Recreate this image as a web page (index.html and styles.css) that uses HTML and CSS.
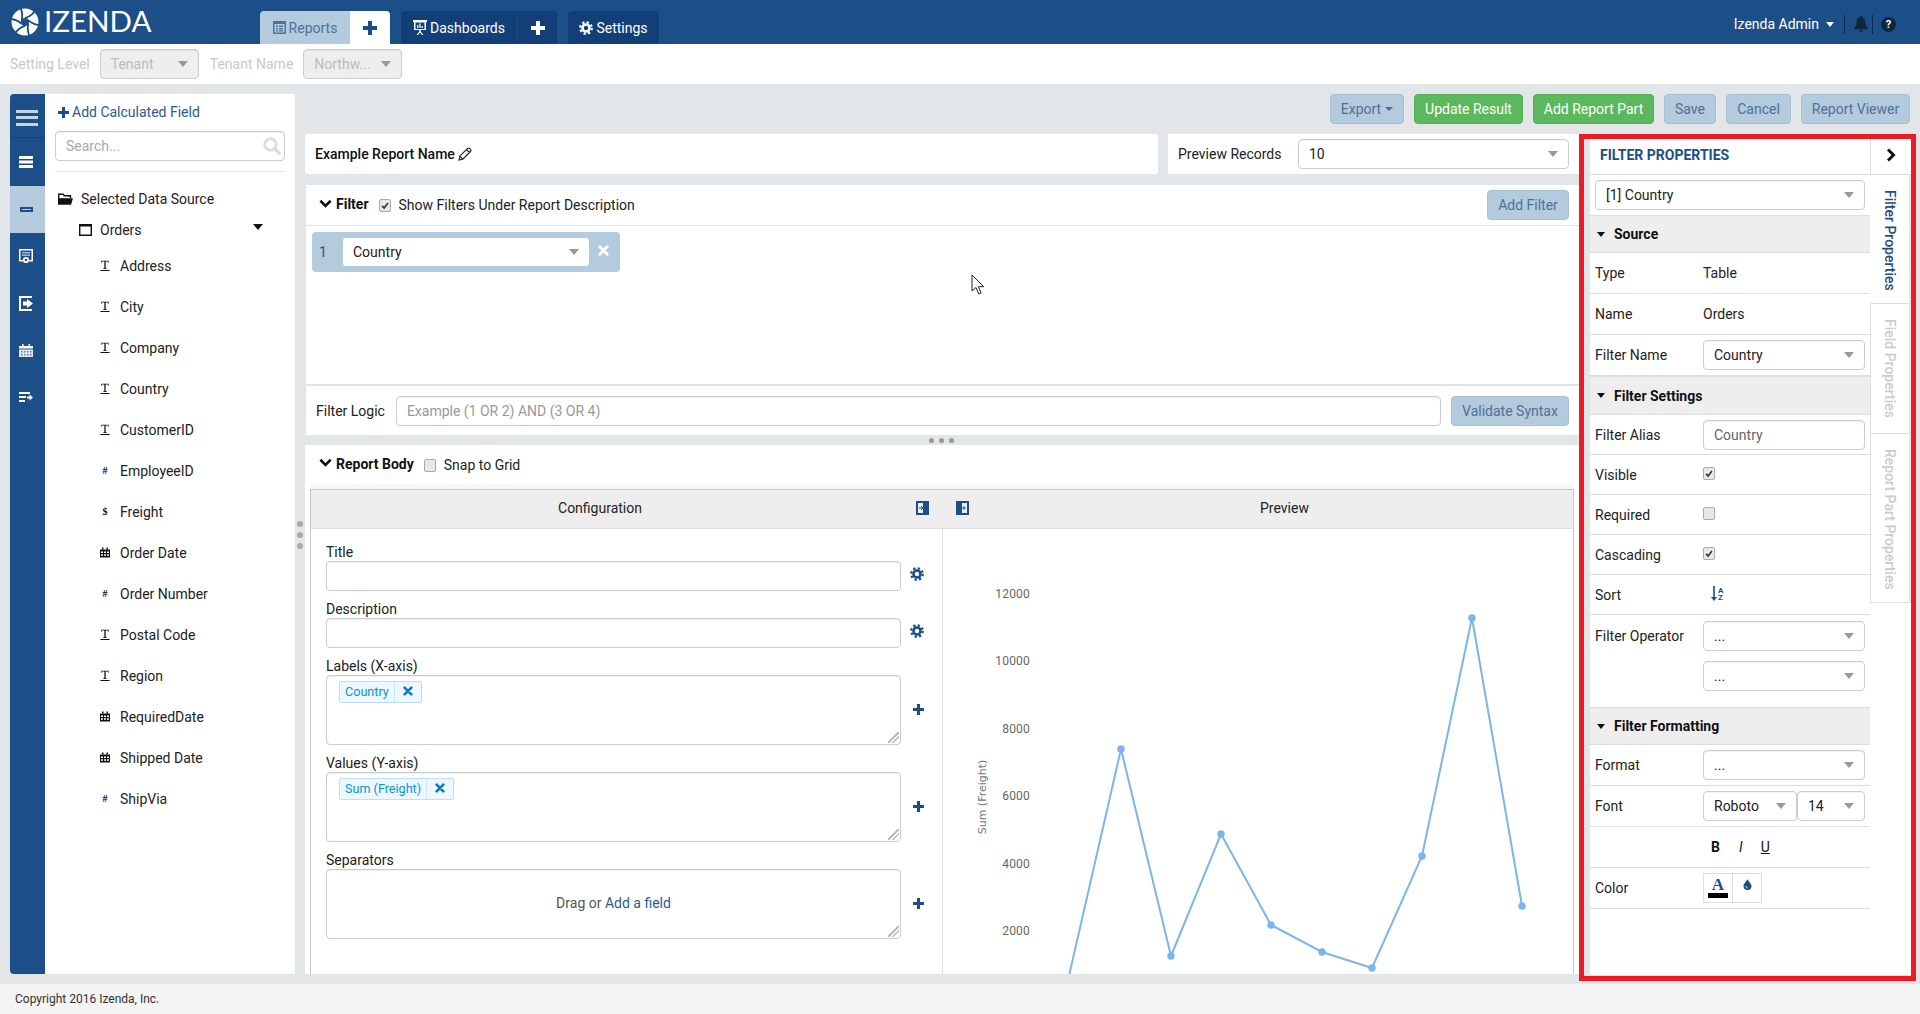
FILE: index.html
```html
<!DOCTYPE html>
<html lang="en">
<head>
<meta charset="utf-8">
<title>Izenda Report Designer</title>
<link rel="stylesheet" href="styles.css">
</head>
<body>
<svg class="defs" width="0" height="0" aria-hidden="true">
  <symbol id="gear" viewBox="0 0 16 16"><circle cx="8" cy="8" r="4" fill="none" stroke="currentColor" stroke-width="3"/><circle cx="8" cy="8" r="6.6" fill="none" stroke="currentColor" stroke-width="2.6" stroke-dasharray="2.6 2.58"/></symbol>
  <symbol id="plus" viewBox="0 0 14 14"><path d="M5 0h4v5h5v4H9v5H5V9H0V5h5z" fill="currentColor"/></symbol>
  <symbol id="times" viewBox="0 0 12 12"><path d="M2 2l8 8M10 2l-8 8" stroke="currentColor" stroke-width="3.2" stroke-linecap="round"/></symbol>
  <symbol id="chev" viewBox="0 0 14 10"><path d="M1.5 1.5L7 7l5.5-5.5" fill="none" stroke="currentColor" stroke-width="2.8"/></symbol>
  <symbol id="cal" viewBox="0 0 10 10"><path d="M0 2h10v8H0z" fill="currentColor"/><path d="M2 0h1.500v2H2zM6.500 0H8v2H6.500z" fill="currentColor"/><path d="M1 4h2v1.500H1zM4 4h2v1.500H4zM7 4h2v1.500H7zM1 6.800h2v1.500H1zM4 6.800h2v1.500H4zM7 6.800h2v1.500H7z" fill="#fff"/></symbol>
  <symbol id="tee" viewBox="0 0 10 12"><path d="M1 .7h8v2.300H8.200V1.600H5.700v7.300h1.200v.8H3.100v-.8h1.200V1.600H1.800V3H1zM0 10.800h10V12H0z" fill="currentColor"/></symbol>
</svg>

<header class="top">
  <div class="logo">
    <svg class="swirl" viewBox="-13 -13 26 26" width="28" height="28">
      <circle r="12.500" fill="#fff"/>
      <g class="slits">
        <path d="M0-3.500C4.500-5 8.500-7.500 10.500-13"/>
        <path transform="rotate(60)" d="M0-3.500C4.500-5 8.500-7.500 10.500-13"/>
        <path transform="rotate(120)" d="M0-3.500C4.500-5 8.500-7.500 10.500-13"/>
        <path transform="rotate(180)" d="M0-3.500C4.500-5 8.500-7.500 10.500-13"/>
        <path transform="rotate(240)" d="M0-3.500C4.500-5 8.500-7.500 10.500-13"/>
        <path transform="rotate(300)" d="M0-3.500C4.500-5 8.500-7.500 10.500-13"/>
      </g>
      <circle r="3.800" fill="#1c4e87"/>
    </svg>
    <span class="logotext">IZENDA</span>
  </div>
  <nav class="tabs">
    <a class="tab light w90">
      <svg class="ti" viewBox="0 0 13 13" width="13" height="13"><path d="M0 0h13v13H0z" fill="#4d7199"/><path d="M1.500 3h10v8.500h-10z" fill="#b3cbdc"/><path d="M3 4.500h2v1.500H3zM6 4.500h4V6H6zM3 7h2v1.500H3zM6 7h4v1.500H6zM3 9.300h2v1.200H3zM6 9.300h4v1.200H6z" fill="#4d7199"/></svg>
      Reports</a>
    <a class="tab white w40"><svg class="plus" width="14" height="14"><use href="#plus"/></svg></a>
    <a class="tab dark w115 ml">
      <svg class="ti" viewBox="0 0 14 15" width="14" height="15"><path d="M0 0h14v2H13v8H1V2H0z" fill="#fff"/><path d="M2.500 2.500h9V9h-9z" fill="#123f78"/><path d="M4 5h1.300v3H4zM6.300 3.500h1.300V8H6.300zM8.600 6h1.300v2H8.600zM6.300 10h1.400v1.500L10.500 15H9l-2-2.500L5 15H3.500l2.800-3.500z" fill="#fff"/></svg>
      Dashboards</a>
    <a class="tab dark w40 sep"><svg width="14" height="14"><use href="#plus"/></svg></a>
    <a class="tab dark w91 ml"><svg class="ti" width="14" height="14"><use href="#gear"/></svg> Settings</a>
  </nav>
  <div class="user">
    <span class="uname">Izenda Admin</span><span class="caret white-c"></span>
    <span class="vsep first"></span>
    <svg class="bell" viewBox="0 0 14 16" width="14" height="16"><path d="M7 0c1 0 1.300.7 1.300 1.300C10.500 2 11.500 3.800 11.500 6.500c0 3 1 4.500 2.500 5.800v.9H0v-.9C1.500 11 2.500 9.500 2.500 6.500c0-2.700 1-4.500 3.200-5.200C5.700.7 6 0 7 0zM5.300 14h3.400c0 1-.7 2-1.700 2s-1.700-1-1.700-2z" fill="#10253f"/></svg>
    <span class="vsep second"></span>
    <span class="help">?</span>
  </div>
</header>

<div class="subbar">
  <span class="sublabel">Setting Level</span>
  <div class="sel disabled w99"><span>Tenant</span><i class="caret"></i></div>
  <span class="sublabel">Tenant Name</span>
  <div class="sel disabled w99"><span>Northw...</span><i class="caret"></i></div>
</div>

<div class="work">
  <aside class="left">
    <div class="rail">
      <div class="rail-top"><span class="burger"></span></div>
      <div class="rail-item first">
        <svg viewBox="0 0 14 12" width="14" height="12"><path d="M0 0h14v3H0zM0 4.500h14v3H0zM0 9h14v3H0z" fill="#fff"/></svg>
      </div>
      <div class="rail-item active">
        <svg viewBox="0 0 13 5" width="13" height="5"><path d="M0 0h13v5H0z" fill="#1c4e87"/><path d="M2 2h9v1H2z" fill="#b3cbdc"/></svg>
      </div>
      <div class="rail-item">
        <svg viewBox="0 0 14 15" width="14" height="15"><path d="M0 0h14v12.500H10V11h2.500V1.500h-11V11H4v1.500H0z" fill="#fff"/><path d="M3 3h8v1.500H3zM3 5.500h8V7H3z" fill="#9fb8d0"/><circle cx="7" cy="11" r="2.200" fill="none" stroke="#fff" stroke-width="1.800"/></svg>
      </div>
      <div class="rail-item">
        <svg viewBox="0 0 14 15" width="14" height="15"><path d="M0 0h13v2H2v11h11v2H0z" fill="#fff"/><path d="M4 5.500h4V3l6 4.500-6 4.500V9.500H4z" fill="#fff"/></svg>
      </div>
      <div class="rail-item">
        <svg viewBox="0 0 14 13" width="14" height="13"><path d="M0 2h14v2.500H0zM3 0h1.500v2H3zM9.500 0H11v2H9.500z" fill="#fff"/><path d="M0 5.500h14V13H0z" fill="#dfe8f0"/><path d="M2 7h1.500v1.500H2zM5 7h1.500v1.500H5zM8 7h1.500v1.500H8zM11 7h1.500v1.500H11zM2 10h1.500v1.500H2zM5 10h1.500v1.500H5zM8 10h1.500v1.500H8zM11 10h1.500v1.500H11z" fill="#5b7ea5"/></svg>
      </div>
      <div class="rail-item">
        <svg viewBox="0 0 14 11" width="14" height="11"><path d="M0 0h11v2H0zM0 4h7v2H0zM0 8h6v2H0zM8 4.500h2.500V2.500L14 5.500l-3.500 3V6.500H8z" fill="#fff"/></svg>
      </div>
    </div>
    <div class="fields">
      <a class="addcalc"><svg class="navy" width="11" height="11"><use href="#plus"/></svg>Add Calculated Field</a>
      <div class="search"><span>Search...</span>
        <svg viewBox="0 0 18 18" width="18" height="18"><circle cx="7.500" cy="7.500" r="5.700" fill="none" stroke="#ddd" stroke-width="3"/><path d="M11.500 11.500L16 16" stroke="#ddd" stroke-width="3.500" stroke-linecap="round"/></svg>
      </div>
      <div class="rule"></div>
      <div class="ds"><svg viewBox="0 0 15 12" width="15" height="12"><path d="M.7 11V1.200h4.500l1 1.500h6.300V5" fill="none" stroke="#111" stroke-width="1.400"/><path d="M0 11.800V5.200h15l-2 6.600z" fill="#111"/></svg><span>Selected Data Source</span></div>
      <div class="orders"><svg viewBox="0 0 13 12" width="13" height="12"><path d="M.7.700h11.600v10.600H.7z" fill="none" stroke="#111" stroke-width="1.400"/><path d="M0 0h13v2.500H0z" fill="#111"/></svg><span>Orders</span><i class="caret black"></i></div>
      <ul class="flist">
        <li><svg class="ft" width="10" height="11"><use href="#tee"/></svg><span>Address</span></li>
        <li><svg class="ft" width="10" height="11"><use href="#tee"/></svg><span>City</span></li>
        <li><svg class="ft" width="10" height="11"><use href="#tee"/></svg><span>Company</span></li>
        <li><svg class="ft" width="10" height="11"><use href="#tee"/></svg><span>Country</span></li>
        <li><svg class="ft" width="10" height="11"><use href="#tee"/></svg><span>CustomerID</span></li>
        <li><b class="ft">#</b><span>EmployeeID</span></li>
        <li><b class="ft">$</b><span>Freight</span></li>
        <li><svg class="ft" width="10" height="10"><use href="#cal"/></svg><span>Order Date</span></li>
        <li><b class="ft">#</b><span>Order Number</span></li>
        <li><svg class="ft" width="10" height="11"><use href="#tee"/></svg><span>Postal Code</span></li>
        <li><svg class="ft" width="10" height="11"><use href="#tee"/></svg><span>Region</span></li>
        <li><svg class="ft" width="10" height="10"><use href="#cal"/></svg><span>RequiredDate</span></li>
        <li><svg class="ft" width="10" height="10"><use href="#cal"/></svg><span>Shipped Date</span></li>
        <li><b class="ft">#</b><span>ShipVia</span></li>
      </ul>
    </div>
    <div class="vdots"><i></i><i></i><i></i></div>
  </aside>

  <div class="rightcol">
    <div class="toolbar">
      <a class="btn b74">Export<i class="caret btn-c"></i></a>
      <a class="btn green b109">Update Result</a>
      <a class="btn green b121">Add Report Part</a>
      <a class="btn b52">Save</a>
      <a class="btn b65">Cancel</a>
      <a class="btn b109">Report Viewer</a>
    </div>
    <div class="content">
      <main class="main">
        <div class="toprow">
          <div class="namebar"><b>Example Report Name</b>
            <svg viewBox="0 0 14 14" width="14" height="14"><path d="M1 13l.8-3.800L9.500 1.500a1.500 1.500 0 0 1 2.100 0l.9.900a1.500 1.500 0 0 1 0 2.100L4.800 12.200zM8.500 2.500l3 3M2 9.500l2.500 2.500" fill="none" stroke="#222" stroke-width="1.100"/></svg>
          </div>
          <div class="previewbar"><span>Preview Records</span>
            <div class="sel w271"><span>10</span><i class="caret"></i></div>
          </div>
        </div>

        <section class="filter">
          <div class="phead">
            <svg class="chev" width="13" height="10"><use href="#chev"/></svg><b>Filter</b>
            <span class="cb on"><svg viewBox="0 0 12 12"><path d="M2.500 6.500l2.500 2.500 4.500-6" fill="none" stroke="#333" stroke-width="2"/></svg></span>
            <span class="cblabel">Show Filters Under Report Description</span>
            <a class="btn push b82">Add Filter</a>
          </div>
          <div class="filterbody">
            <div class="fchip"><span class="fnum">1</span>
              <div class="sel plain"><span>Country</span><i class="caret"></i></div>
              <svg class="fx" width="11" height="11"><use href="#times"/></svg>
            </div>
          </div>
          <div class="logic">
            <span>Filter Logic</span>
            <div class="inp grow ph">Example (1 OR 2) AND (3 OR 4)</div>
            <a class="btn b118">Validate Syntax</a>
          </div>
        </section>
        <div class="hdots"><i></i><i></i><i></i></div>

        <section class="rbody">
          <div class="phead tall">
            <svg class="chev" width="13" height="10"><use href="#chev"/></svg><b>Report Body</b>
            <span class="cb"></span>
            <span class="cblabel">Snap to Grid</span>
          </div>
          <div class="gridstrip"></div>
          <div class="box">
            <div class="boxhead">
              <div class="bh-left">Configuration
                <svg class="bi bi1" viewBox="0 0 13 14" width="13" height="14"><path d="M0 0h13v14H0z" fill="#1c4e87"/><path d="M2 2h5v10H2z" fill="#eee"/><path d="M3 7h3M5 5l2 2-2 2" fill="none" stroke="#1c4e87" stroke-width="1"/></svg>
                <svg class="bi bi2" viewBox="0 0 13 14" width="13" height="14"><path d="M0 0h13v14H0z" fill="#1c4e87"/><path d="M6 2h5v10H6z" fill="#eee"/><path d="M10 7H7M8.500 5l-2 2 2 2" fill="none" stroke="#1c4e87" stroke-width="1"/></svg>
              </div>
              <div class="bh-right">Preview</div>
            </div>
            <div class="boxbody">
              <div class="config">
                <div class="fg"><label>Title</label>
                  <div class="fgrow"><div class="inp"></div><svg class="side gearic" width="14" height="14"><use href="#gear"/></svg></div></div>
                <div class="fg"><label>Description</label>
                  <div class="fgrow"><div class="inp"></div><svg class="side gearic" width="14" height="14"><use href="#gear"/></svg></div></div>
                <div class="fg"><label>Labels (X-axis)</label>
                  <div class="fgrow"><div class="area"><span class="tag"><em>Country</em><svg width="10" height="10"><use href="#times"/></svg></span><span class="grip"></span></div><svg class="side plusic" width="11" height="11"><use href="#plus"/></svg></div></div>
                <div class="fg"><label>Values (Y-axis)</label>
                  <div class="fgrow"><div class="area"><span class="tag"><em>Sum (Freight)</em><svg width="10" height="10"><use href="#times"/></svg></span><span class="grip"></span></div><svg class="side plusic" width="11" height="11"><use href="#plus"/></svg></div></div>
                <div class="fg"><label>Separators</label>
                  <div class="fgrow"><div class="area center">Drag or&nbsp;<a>Add a field</a><span class="grip"></span></div><svg class="side plusic" width="11" height="11"><use href="#plus"/></svg></div></div>
              </div>
              <div class="preview">
                <svg class="chart" viewBox="0 0 631 445" width="631" height="445">
                  <g class="ticks">
                    <text x="87" y="69">12000</text>
                    <text x="87" y="136">10000</text>
                    <text x="87" y="204">8000</text>
                    <text x="87" y="271">6000</text>
                    <text x="87" y="339">4000</text>
                    <text x="87" y="406">2000</text>
                  </g>
                  <text class="ytitle" transform="translate(43 268) rotate(-90)">Sum (Freight)</text>
                  <polyline class="line" points="123,460 178,220 228,427 278,305 328,396 379,423 429,439 479,327 529,89 579,377"/>
                  <g class="pts">
                    <circle cx="178" cy="220" r="3.700"/><circle cx="228" cy="427" r="3.700"/><circle cx="278" cy="305" r="3.700"/><circle cx="328" cy="396" r="3.700"/><circle cx="379" cy="423" r="3.700"/><circle cx="429" cy="439" r="3.700"/><circle cx="479" cy="327" r="3.700"/><circle cx="529" cy="89" r="3.700"/><circle cx="579" cy="377" r="3.700"/>
                  </g>
                </svg>
              </div>
            </div>
          </div>
        </section>
      </main>

      <div class="frame">
        <div class="panel">
          <div class="pmain">
            <div class="ptitle">FILTER PROPERTIES</div>
            <div class="pselwrap"><div class="sel"><span>[1] Country</span><i class="caret"></i></div></div>
            <div class="sect s38"><i class="caret black"></i>Source</div>
            <div class="prow"><label>Type</label><span>Table</span></div>
            <div class="prow"><label>Name</label><span>Orders</span></div>
            <div class="prow"><label>Filter Name</label><div class="sel w162"><span>Country</span><i class="caret"></i></div></div>
            <div class="sect s39"><i class="caret black"></i>Filter Settings</div>
            <div class="prow r40"><label>Filter Alias</label><div class="inp w162 muted">Country</div></div>
            <div class="prow r40"><label>Visible</label><span class="cb on big"><svg viewBox="0 0 12 12"><path d="M2.500 6.500l2.500 2.500 4.500-6" fill="none" stroke="#333" stroke-width="2"/></svg></span></div>
            <div class="prow r40"><label>Required</label><span class="cb big"></span></div>
            <div class="prow r40"><label>Cascading</label><span class="cb on big"><svg viewBox="0 0 12 12"><path d="M2.500 6.500l2.500 2.500 4.500-6" fill="none" stroke="#333" stroke-width="2"/></svg></span></div>
            <div class="prow r40"><label>Sort</label>
              <svg class="sorti" viewBox="0 0 15 15" width="15" height="15"><path d="M3.200 0h1.600v11H7l-3 4-3-4h2.200z" fill="#1c4e87"/><text x="8" y="6.500" class="az">A</text><text x="8" y="14" class="az">Z</text></svg>
            </div>
            <div class="opblock">
              <div class="oprow"><label>Filter Operator</label><div class="sel w162"><span>...</span><i class="caret"></i></div></div>
              <div class="oprow"><label></label><div class="sel w162"><span>...</span><i class="caret"></i></div></div>
            </div>
            <div class="sect s38"><i class="caret black"></i>Filter Formatting</div>
            <div class="prow"><label>Format</label><div class="sel w162"><span>...</span><i class="caret"></i></div></div>
            <div class="prow"><label>Font</label><div class="sel w94"><span>Roboto</span><i class="caret"></i></div><div class="sel w68"><span>14</span><i class="caret"></i></div></div>
            <div class="prow"><label></label><div class="biu"><b>B</b><i>I</i><u>U</u></div></div>
            <div class="prow"><label>Color</label>
              <div class="swatch first"><span class="aa">A</span><span class="bar"></span></div>
              <div class="swatch"><svg viewBox="0 0 9 11" width="9" height="11"><path d="M4.500 0C5 2 8.500 4.500 8.500 7a4 4 0 0 1-8 0C.5 4.500 4 2 4.500 0z" fill="#1c4e87"/><path d="M3 7c0 1 .5 1.800 1.500 2" stroke="#fff" fill="none"/></svg></div>
            </div>
          </div>
          <div class="ptabs">
            <div class="phd"><svg viewBox="0 0 10 14" width="10" height="14"><path d="M2 1.500L7.500 7 2 12.500" fill="none" stroke="#111" stroke-width="3"/></svg></div>
            <div class="vt on t1"><span>Filter Properties</span></div>
            <div class="vt t2"><span>Field Properties</span></div>
            <div class="vt t3"><span>Report Part Properties</span></div>
          </div>
        </div>
      </div>
    </div>
  </div>
</div>

<footer class="foot">Copyright 2016 Izenda, Inc.</footer>

<svg class="cursor" viewBox="0 0 14 22" width="14" height="22"><path d="M1 1v16l4-3.500 2.800 6.500 2.400-1-2.800-6.300h5.300z" fill="#fff" stroke="#222" stroke-width="1"/></svg>
</body>
</html>
```
FILE: styles.css
```css
* { box-sizing: border-box; }
html, body { margin: 0; height: 1014px; overflow: hidden; }
body {
  display: flex; flex-direction: column; position: relative;
  font: 14px/20px Roboto, "Liberation Sans", sans-serif; color: #222; background: #e3e6e9;
}
.defs { position: absolute; }
ul { margin: 0; padding: 0; list-style: none; }
a { color: inherit; text-decoration: none; }
label { font-weight: 400; }

/* top bar */
.top { height: 44px; background: #1c4e87; display: flex; flex: none; color: #fff; }
.logo { width: 260px; padding-left: 11px; display: flex; align-items: center; height: 44px; }
.swirl { margin-top: -1px; flex: none; }
.slits path { fill: none; stroke: #1c4e87; stroke-width: 1.7; }
.logotext { font: 400 29.5px/44px Lato, "Open Sans", sans-serif; margin-left: 5px; margin-top: -2px; }
.tabs { display: flex; align-items: flex-end; height: 44px; }
.tab { height: 33px; display: flex; align-items: center; justify-content: center; gap: 3px; border-radius: 4px 4px 0 0; }
.tab.light { background: #b3cbdc; color: #4d7199; border-radius: 4px 0 0 0; }
.tab.white { background: #fff; color: #1c4e87; border-radius: 0 4px 0 0; }
.tab.dark { background: #123f78; color: #fff; }
.w90 { width: 90px; } .w40 { width: 40px; } .w115 { width: 116px; border-radius: 4px 0 0 0 !important; } .w91 { width: 91px; }
.ml { margin-left: 11px; }
.sep { border-radius: 0 4px 0 0 !important; border-left: 1px solid #1c4a80; }
.user { margin-left: auto; display: flex; align-items: center; height: 44px; padding: 4px 24px 0 0; }
.uname { margin-right: 7px; }
.vsep { width: 1px; height: 19px; background: #10294a; }
.vsep.first { margin: 0 9px 0 10px; }
.vsep.second { margin: 0 8px 0 4px; }
.help { width: 15px; height: 15px; border-radius: 50%; background: #10253f; color: #fff; font: 700 11px/15px Roboto, sans-serif; text-align: center; }
.caret { display: inline-block; width: 0; height: 0; border: 5px solid transparent; border-top: 6px solid #999; border-bottom: 0; flex: none; }
.caret.white-c { border-top-color: #fff; border-width: 4px 4px 0; border-top-width: 5px; }
.caret.black { border-top-color: #111; }
.caret.btn-c { border-top-color: #4d7199; border-width: 4px 4px 0; margin-left: 4px; vertical-align: 2px; }

/* sub bar */
.subbar { height: 40px; background: #fff; flex: none; display: flex; align-items: center; padding-left: 10px; }
.sublabel { color: #c8c8c8; margin-right: 10px; }
.subbar .sel { margin-right: 11px; }

/* selects & inputs */
.sel { height: 30px; border: 1px solid #ccc; border-radius: 4px; background: #fff; display: flex; align-items: center; justify-content: space-between; padding: 0 10px; color: #222; flex: none; box-shadow: inset 0 1px 1px rgba(0,0,0,.05); }
.sel.disabled { background: #eee; color: #bbb; }
.sel.plain { border: 0; border-radius: 3px; height: 28px; width: 246px; box-shadow: none; }
.w99 { width: 99px; } .w271 { width: 271px; } .w162 { width: 162px; } .w94 { width: 94px; } .w68 { width: 68px; }
.inp { height: 30px; border: 1px solid #ccc; border-radius: 4px; background: #fff; padding: 4px 10px; box-shadow: inset 0 1px 1px rgba(0,0,0,.07); }
.inp.ph { color: #999; }
.inp.muted { color: #666; }
.grow { flex: 1; }

/* work area */
.work { height: 900px; flex: none; display: flex; padding: 10px 4px 10px 10px; gap: 10px; }
.left { width: 285px; flex: none; display: flex; position: relative; }
.rail { width: 35px; background: #1c4e87; border-radius: 4px 0 0 4px; flex: none; }
.rail-top { height: 44px; border-bottom: 1px solid #174270; display: flex; align-items: center; justify-content: center; padding: 4px 1px 0 0; }
.burger { width: 22px; height: 16px; border-top: 3px solid #c5d5e3; border-bottom: 3px solid #c5d5e3; position: relative; }
.burger::after { content: ""; position: absolute; left: 0; right: 0; top: 3.5px; height: 3px; background: #c5d5e3; }
.rail-item { height: 47px; display: flex; align-items: center; justify-content: center; padding-right: 3px; }
.rail-item.first { height: 48px; }
.rail-item.active { background: #b3cbdc; }
.fields { width: 250px; background: #fff; padding: 0 10px; flex: none; }
.addcalc { height: 36px; margin-bottom: 1px; display: flex; align-items: center; color: #2b5a92; padding-left: 3px; gap: 3px; }
.navy { color: #1c4e87; }
.search { height: 30px; border: 1px solid #ccc; border-radius: 4px; display: flex; align-items: center; justify-content: space-between; padding: 0 3px 0 10px; color: #aaa; box-shadow: inset 0 1px 1px rgba(0,0,0,.07); }
.rule { height: 1px; background: #e7e7e7; margin-top: 10px; }
.ds { height: 31px; margin-top: 11px; display: flex; align-items: center; padding-left: 3px; gap: 8px; }
.orders { height: 31px; display: flex; align-items: center; padding-left: 24px; gap: 8px; position: relative; }
.orders .caret { position: absolute; left: 198px; top: 10px; }
.flist li { height: 41px; display: flex; align-items: center; padding-left: 45px; }
.flist span { margin-left: 10px; }
.ft { width: 10px; height: 11px; flex: none; color: #111; text-align: center; font: 700 10px/11px "Liberation Serif", serif; }
.vdots { position: absolute; left: 287px; top: 427px; display: flex; flex-direction: column; gap: 5px; }
.vdots i { width: 6px; height: 6px; border-radius: 50%; background: #aaa; }

.rightcol { flex: 1; display: flex; flex-direction: column; gap: 10px; min-width: 0; }
.toolbar { height: 30px; display: flex; justify-content: flex-end; gap: 10px; padding-right: 6px; flex: none; }
.btn { height: 30px; display: inline-flex; align-items: center; justify-content: center; background: #b3cbdc; border: 1px solid #a6c0d3; border-radius: 4px; color: #4d7199; white-space: nowrap; flex: none; }
.btn.green { background: #5cb85c; border-color: #53ad53; color: #fff; }
.btn.push { margin-left: auto; }
.b52 { width: 52px; } .b65 { width: 65px; } .b74 { width: 74px; } .b82 { width: 82px; } .b109 { width: 109px; } .b118 { width: 118px; } .b121 { width: 121px; }

.content { height: 840px; display: flex; }
.main { width: 1274px; flex: none; display: flex; flex-direction: column; position: relative; }
.toprow { height: 40px; display: flex; gap: 10px; flex: none; margin-bottom: 11px; }
.namebar { width: 853px; background: #fff; border-radius: 3px; display: flex; align-items: center; padding-left: 10px; gap: 3px; }
.namebar b { font-weight: 500; color: #111; }
.previewbar { flex: 1; background: #fff; display: flex; align-items: center; padding: 0 10px; justify-content: space-between; }
.filter { height: 250px; flex: none; background: #fff; margin-left: 1px; display: flex; flex-direction: column; }
.phead { height: 41px; flex: none; border-bottom: 1px solid #e3e3e3; display: flex; align-items: center; padding: 0 10px 0 13px; }
.phead.tall { height: 39px; border-bottom: 0; padding: 0 0 0 14px; }
.phead b { font-weight: 700; color: #111; margin-left: 4px; margin-top: -2px; }
.chev { color: #111; margin-top: -3px; }
.cb { width: 12px; height: 13px; border: 1px solid #aaa; border-radius: 2px; background: #e8e8e8; display: inline-block; flex: none; margin: 1px 8px 0 10px; }
.cb svg { display: block; width: 10px; height: 11px; }
.cb.big { margin: -3px 0 0 0; }
.filterbody { height: 160px; flex: none; border-bottom: 2px solid #e3e3e3; padding: 6px 0 0 6px; }
.fchip { width: 308px; height: 40px; background: #b3cbdc; border-radius: 4px; display: flex; align-items: center; position: relative; padding-left: 31px; }
.fnum { position: absolute; left: 7px; color: #34506e; }
.fx { color: #fff; margin-left: 9px; margin-top: -3px; }
.logic { flex: 1; display: flex; align-items: center; padding: 0 10px; gap: 10px; }
.logic span { margin-right: 1px; }
.hdots { height: 10px; flex: none; display: flex; align-items: center; justify-content: center; gap: 5px; padding-right: 2px; }
.hdots i { width: 5px; height: 5px; border-radius: 50%; background: #999; }
.rbody { flex: 1; background: #fff; display: flex; flex-direction: column; min-height: 0; }
.gridstrip { height: 5px; flex: none; background: #f7f7f7; margin: 0 5px; }
.box { flex: 1; margin: 0 5px; border: 1px solid #c9c9c9; border-bottom: 0; display: flex; flex-direction: column; min-height: 0; }
.boxhead { height: 39px; flex: none; background: #eee; border-bottom: 1px solid #ddd; display: flex; }
.bh-left { width: 631px; position: relative; text-align: center; line-height: 36px; padding-right: 53px; }
.bh-right { flex: 1; text-align: center; line-height: 36px; padding-left: 54px; }
.bi { position: absolute; top: 11px; }
.bi1 { left: 605px; }
.bi2 { left: 645px; }
.boxbody { flex: 1; display: flex; min-height: 0; }
.config { width: 632px; flex: none; border-right: 1px solid #e3e3e3; padding: 14px 0 0 15px; display: flex; flex-direction: column; gap: 9px; }
.fg label { display: block; height: 18px; line-height: 18px; }
.fgrow { display: flex; align-items: center; }
.fgrow .inp { width: 575px; }
.side { color: #1c4e87; flex: none; }
.gearic { margin-left: 9px; margin-top: -4px; }
.plusic { margin-left: 12px; margin-top: -2px; }
.area { width: 575px; height: 70px; border: 1px solid #ccc; border-radius: 4px; position: relative; padding: 5px 12px; box-shadow: inset 0 1px 1px rgba(0,0,0,.07); }
.area.center { display: flex; align-items: center; justify-content: center; color: #555; padding-bottom: 7px; }
.area a { color: #2b5a92; }
.tag { display: inline-flex; height: 22px; border: 1px solid #b9e0f6; background: #edf8fe; border-radius: 2px; color: #0d93d6; font-size: 12.6px; align-items: center; }
.tag em { font-style: normal; padding: 0 5px; border-right: 1px solid #cfe6f3; height: 20px; line-height: 20px; }
.tag svg { margin: -2px 8px 0 8px; color: #0d7bc0; }
.grip { position: absolute; right: 1px; bottom: 1px; width: 11px; height: 11px; background: linear-gradient(135deg, transparent 0 45%, #bbb 45% 55%, transparent 55% 66%, #bbb 66% 76%, transparent 76%); }
.preview { flex: 1; overflow: hidden; min-width: 0; }
.chart { display: block; }
.ticks text { text-anchor: end; font: 12px Roboto, sans-serif; fill: #666; letter-spacing: .2px; }
.ytitle { text-anchor: middle; font: 11px "DejaVu Sans", sans-serif; fill: #777; }
.line { fill: none; stroke: #7cb5ec; stroke-width: 2; }
.pts circle { fill: #7cb5ec; }

/* annotated properties panel */
.frame { width: 337px; height: 847px; flex: none; border: 5px solid #ed1c24; padding: 0 0 1px 6px; margin-bottom: -7px; background: #e3e6e9; }
.panel { height: 100%; background: #fff; display: flex; }
.pmain { width: 280px; flex: none; }
.ptitle { height: 36px; border-bottom: 1px solid #ddd; padding-left: 10px; font-weight: 700; color: #1c4e87; line-height: 32px; }
.pselwrap { padding: 5px; height: 40px; }
.pselwrap .sel { width: 270px; }
.sect { background: #eee; border-top: 1px solid #ddd; border-bottom: 1px solid #ddd; display: flex; align-items: center; font-weight: 700; color: #111; padding-left: 7px; gap: 9px; }
.sect .caret { border-width: 4px 4px 0; border-top-width: 5px; }
.s38 { height: 38px; } .s39 { height: 39px; }
.prow { height: 41px; border-bottom: 1px solid #ddd; display: flex; align-items: center; padding-left: 5px; }
.prow.r40 { height: 40px; }
.prow label, .oprow label { width: 108px; flex: none; }
.oprow { display: flex; align-items: center; padding-left: 5px; margin-bottom: 10px; }
.opblock { padding-top: 6px; height: 92px; }
.sorti { margin-left: 7px; margin-top: -2px; }
.az { font: 700 8px Roboto, sans-serif; fill: #1c4e87; }
.biu { display: flex; padding-left: 8px; gap: 17px; color: #111; line-height: 20px; }
.biu i { margin-left: 2px; }
.biu u { margin-left: 1px; }
.swatch { width: 30px; height: 30px; border: 1px solid #ddd; display: flex; justify-content: center; padding-top: 5px; position: relative; margin-left: -1px; }
.swatch.first { margin-left: 0; padding-top: 0; }
.aa { font: 700 17px/22px "Liberation Serif", serif; color: #1c4e87; }
.bar { position: absolute; left: 4px; right: 4px; bottom: 4px; height: 5px; background: #000; }
.ptabs { flex: 1; display: flex; flex-direction: column; }
.phd { height: 36px; border-left: 1px solid #ddd; border-bottom: 1px solid #ddd; display: flex; align-items: center; justify-content: center; padding: 0 1px 4px 0; }
.vt { border-right: 2px solid #e3e6e9; border-bottom: 1px solid #ddd; border-left: 1px solid #ddd; display: flex; justify-content: center; color: #ccc; font-weight: 500; font-size: 14px; }
.vt span { writing-mode: vertical-rl; line-height: 20px; margin-top: 15px; }
.vt.on { color: #1c4e87; border-left-color: transparent; }
.t1 { height: 129px; } .t2 { height: 130px; } .t3 { height: 169px; }

.foot { flex: none; height: 30px; background: #f4f4f4; font-size: 12px; line-height: 30px; padding-left: 15px; color: #333; }
.cursor { position: absolute; left: 971px; top: 274px; }
```
